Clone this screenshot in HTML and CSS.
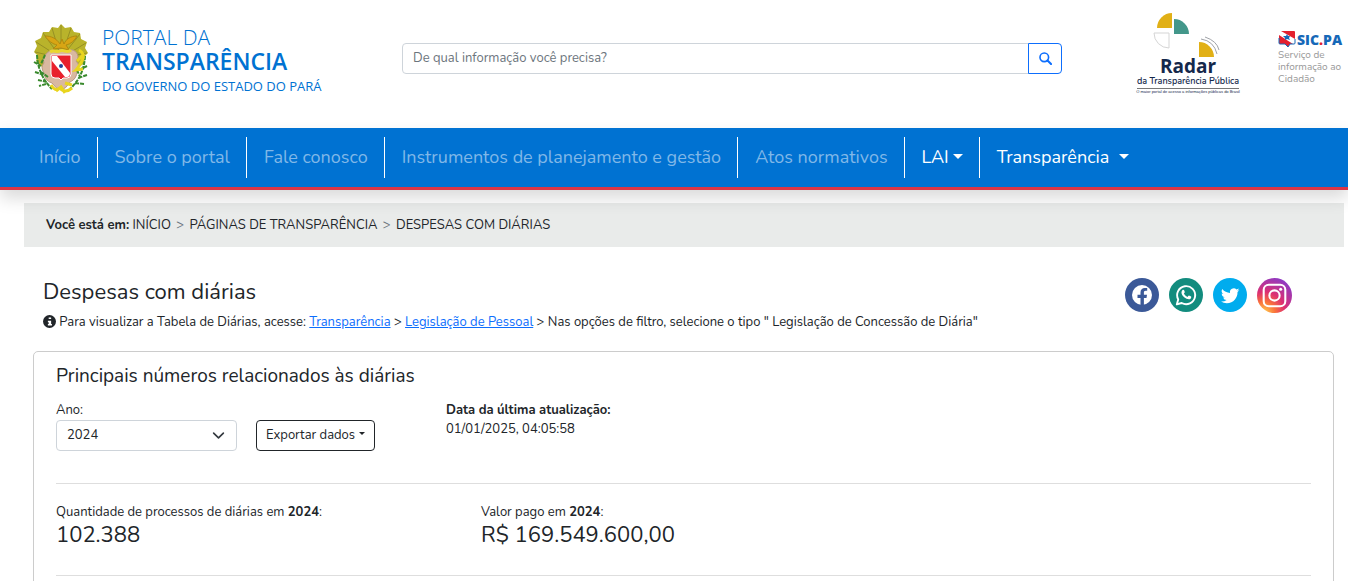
FILE: index.html
```
<!DOCTYPE html>
<html lang="pt-BR">
<head>
    <meta charset="UTF-8">
    <meta name="viewport" content="width=device-width, initial-scale=1.0">
    <title>Despesas com diárias - Portal da Transparência</title>
    <link rel="stylesheet" href="styles.css">
</head>
<body>

<header class="header">
    <a class="brand" href="#">
        <svg class="brand-crest" viewBox="0 0 56 72" aria-hidden="true">
            <path d="M9 43 3 37 5 32 1 28 4 22 2 17 8 14 10 8 16 8 19 3 25 4 28 0 32 4 38 3 41 8 47 9 48 15 54 18 52 24 55 29 51 33 52 39 46 43Z" fill="#b9b32b"/>
            <path d="M28 34V1M28 34 19 4M28 34 10 9M28 34 3 18M28 34 2 28M28 34 38 4M28 34 47 10M28 34 53 19M28 34 54 29" stroke="#969024" stroke-width="1" fill="none"/>
            <path d="M14 29q5-5 9-2 5-3 10 0 6-3 10 1 4 5 0 9 5 5 1 10 0 8-7 11-4 7-9 8-5-1-9-7-7-2-8-10-4-6 0-10-2-5 3-10z" fill="#d9b8a0" stroke="#b89a84" stroke-width="1"/>
            <path d="M27 20c-4-6-9-8-15-8 3 5 8 8 12 9l-4 4 8-1 8 2-3-5c5-1 9-5 11-9-6 0-11 3-13 8l-2-5z" fill="#d8a514" stroke="#b08a10" stroke-width="1"/>
            <path d="M17 28c4-3 6 1 10-1s7 3 11-1" stroke="#ead72f" stroke-width="3" fill="none"/>
            <path d="M4 31q1 20 15 34M1 38l7 4M2 48l9 3M5 56l9 2M12 31l-4 9M13 60l-7 2M15 53l-7-5" stroke="#3a8a2e" stroke-width="2" fill="none" stroke-dasharray="4 1"/>
            <path d="M52 32q-1 20-15 33M54 42l-8 4M54 51l-9 3M51 60l-9-1M44 46l4 9" stroke="#3a8a2e" stroke-width="2" fill="none" stroke-dasharray="4 1"/>
            <path d="M46 26q7 4 3 11t-6 9l7-1M50 31l-6 6" stroke="#e9d51e" stroke-width="3" fill="none"/>
            <path d="M18 61q4 7 9 3 5 6 12 0M23 67l5-4 4 6M32 59l7 2" stroke="#e9d51e" stroke-width="3" fill="none"/>
            <path d="M18 31h20v19q0 4-4 4h-4l-2 2-2-2h-4q-4 0-4-4z" fill="#e8202c" stroke="#fff" stroke-width="1"/>
            <path d="M19 32h5l13 17q0 4-3 4h-2L19 37z" fill="#fff"/>
            <circle cx="28" cy="42" r="2" fill="#24449a"/>
        </svg>
        <span class="brand-text">
            <span class="brand-top">PORTAL DA</span>
            <span class="brand-main">TRANSPARÊNCIA</span>
            <span class="brand-sub">DO GOVERNO DO ESTADO DO PARÁ</span>
        </span>
    </a>

    <form class="search" role="search">
        <input type="search" class="search-input" placeholder="De qual informação você precisa?" aria-label="De qual informação você precisa?">
        <button type="submit" class="search-btn" aria-label="Buscar">
            <svg width="13" height="13" viewBox="0 0 16 16" aria-hidden="true"><circle cx="6.5" cy="6.5" r="5.3" fill="none" stroke="currentColor" stroke-width="2"/><path d="m10.5 10.5 4.3 4.3" stroke="currentColor" stroke-width="2.5" stroke-linecap="round"/></svg>
        </button>
    </form>

    <div class="partners">
        <a class="radar" href="#">
            <svg class="radar-mark" viewBox="0 0 66 46" aria-hidden="true">
                <path d="M17 15V0A15 15 0 0 0 2 15z" fill="#e1b016"/>
                <path d="M19 6v15h15A15 15 0 0 0 19 6z" fill="#43978a"/>
                <path d="M14 20v15A15 15 0 0 1 -1 20z" fill="#fff" stroke="#d5d5d5" stroke-width="1"/>
                <path d="M44 29v15h15A15 15 0 0 0 44 29z" fill="#e1b016"/>
                <path d="M46 26q13 2 16 15M50 24q12 4 14 13" fill="none" stroke="#a0a3a8" stroke-width="1"/>
            </svg>
            <span class="radar-name">Radar</span>
            <span class="radar-sub">da Transparência Pública</span>
            <span class="radar-note">O maior portal de acesso a informações públicas do Brasil</span>
        </a>
        <a class="sic" href="#">
            <span class="sic-name">
                <svg width="18" height="18" viewBox="0 0 18 18" aria-hidden="true">
                    <path d="M1 1h15q1 0 1 1v11q0 1-1 1h-4l-2 3-3-3H2q-1 0-1-1V2q0-1 1-1z" fill="#e3202e"/>
                    <path d="M1 1h2l14 8v5h-2L1 5z" fill="#fff"/>
                    <path d="m9 4 1 2h2l-1 2 1 2-3-1-2 1v-2L5 6h3z" fill="#1668b8"/>
                    <path d="M1 8v5q0 1 1 1h5l3 3 2-3h4q1 0 1-1V9" fill="none" stroke="#1668b8" stroke-width="1"/>
                </svg>SIC<span class="sic-dot">.</span>PA
            </span>
            <span class="sic-text">Serviço de informação ao Cidadão</span>
        </a>
    </div>
</header>

<nav class="navbar" aria-label="Principal">
    <ul class="nav-list">
        <li><a href="#">Início</a></li>
        <li><a href="#">Sobre o portal</a></li>
        <li><a href="#">Fale conosco</a></li>
        <li><a href="#">Instrumentos de planejamento e gestão</a></li>
        <li><a href="#">Atos normativos</a></li>
        <li><button type="button" class="nav-toggle">LAI<span class="caret"></span></button></li>
        <li><button type="button" class="nav-toggle nav-toggle-wide">Transparência<span class="caret"></span></button></li>
    </ul>
</nav>

<nav class="breadcrumb" aria-label="Você está em">
    <strong>Você está em:</strong>
    <a href="#">INÍCIO</a>
    <span class="sep">&gt;</span>
    <a href="#">PÁGINAS DE TRANSPARÊNCIA</a>
    <span class="sep">&gt;</span>
    <span>DESPESAS COM DIÁRIAS</span>
</nav>

<main class="content">
    <div class="page-head">
        <div>
            <h1>Despesas com diárias</h1>
            <p class="hint">
                <svg width="13" height="13" viewBox="0 0 16 16" aria-hidden="true"><circle cx="8" cy="8" r="8" fill="#212529"/><path d="M7 3h3v2H7zM6 7h4v4h1v2H6v-2h1V9H6z" fill="#fff"/></svg>
                Para visualizar a Tabela de Diárias, acesse: <a href="#">Transparência</a> &gt; <a href="#">Legislação de Pessoal</a> &gt; Nas opções de filtro, selecione o tipo " Legislação de Concessão de Diária"
            </p>
        </div>
        <div class="social">
            <a href="#" aria-label="Facebook">
                <svg viewBox="0 0 34 34"><circle cx="17" cy="17" r="17" fill="#3b5998"/><circle cx="17" cy="17" r="10" fill="#fff"/><path d="M15.5 27.5V20h-3v-3.200h3v-2.400c0-3 1.700-4.500 4.300-4.500l2.400.2v2.700h-1.500c-1.400 0-1.800.8-1.800 1.700v2.300h3.100l-.5 3.200h-2.600v7.500z" fill="#3b5998"/></svg>
            </a>
            <a href="#" aria-label="WhatsApp">
                <svg viewBox="0 0 34 34"><circle cx="17" cy="17" r="17" fill="#128c7e"/><path d="m7.800 26.400 1.400-5a9 9 0 1 1 3.500 3.600z" fill="none" stroke="#fff" stroke-width="1.900" stroke-linejoin="round"/><path d="M13.600 12c.6-.6 1.200-.3 1.400.1l.8 1.900c.1.500-.7 1.300-.9 1.500.7 1.500 2 2.700 3.600 3.400.4-.3 1.100-1.400 1.500-1.300l2.100 1c.3.300.1 1.600-.5 2.100-2.500 2-8.800-2.100-9.100-5.700-.1-1.200.4-2.300 1.100-3z" fill="#fff"/></svg>
            </a>
            <a href="#" aria-label="Twitter">
                <svg viewBox="0 0 34 34"><circle cx="17" cy="17" r="17" fill="#00acee"/><path transform="translate(8 8) scale(1.150)" d="M5.026 15c6.038 0 9.341-5.003 9.341-9.334q.002-.211-.006-.422A6.700 6.700 0 0 0 16 3.542a6.700 6.700 0 0 1-1.889.518 3.300 3.300 0 0 0 1.447-1.817 6.500 6.500 0 0 1-2.087.793A3.286 3.286 0 0 0 7.875 6.030a9.320 9.320 0 0 1-6.767-3.429 3.290 3.290 0 0 0 1.018 4.382A3.300 3.300 0 0 1 .64 6.575v.045a3.290 3.290 0 0 0 2.632 3.218 3.200 3.200 0 0 1-.865.115 3 3 0 0 1-.614-.057 3.280 3.280 0 0 0 3.067 2.277A6.600 6.600 0 0 1 .78 13.580a6 6 0 0 1-.78-.045A9.340 9.340 0 0 0 5.026 15" fill="#fff"/></svg>
            </a>
            <a href="#" aria-label="Instagram">
                <svg class="social-insta" viewBox="0 0 34 34">
                    <defs><radialGradient id="insta" cx=".2" cy="1" r="1.100"><stop offset="0" stop-color="#ffd04f"/><stop offset=".3" stop-color="#f9703c"/><stop offset=".55" stop-color="#dc2f72"/><stop offset="1" stop-color="#8a3ac8"/></radialGradient></defs>
                    <circle cx="17" cy="17" r="17" fill="url(#insta)"/>
                    <rect x="6.500" y="6.500" width="21" height="21" rx="5" fill="none" stroke="#fff" stroke-width="2"/>
                    <circle cx="17" cy="17" r="5" fill="none" stroke="#fff" stroke-width="2"/>
                    <circle cx="23" cy="11" r="1.500" fill="#fff"/>
                </svg>
            </a>
        </div>
    </div>

    <section class="card">
        <h2>Principais números relacionados às diárias</h2>
        <div class="filters">
            <div class="field">
                <label for="ano">Ano:</label>
                <select id="ano">
                    <option>2024</option>
                    <option>2023</option>
                    <option>2022</option>
                </select>
            </div>
            <button type="button" class="export-btn">Exportar dados<span class="caret"></span></button>
            <p class="updated"><strong>Data da última atualização:</strong><br>01/01/2025, 04:05:58</p>
        </div>
        <hr>
        <div class="totals">
            <div>
                <p>Quantidade de processos de diárias em <strong>2024</strong>:</p>
                <p class="total">102.388</p>
            </div>
            <div>
                <p>Valor pago em <strong>2024</strong>:</p>
                <p class="total">R$ 169.549.600,00</p>
            </div>
        </div>
        <hr>
    </section>
</main>

</body>
</html>
```
FILE: styles.css
```
* {
    box-sizing: border-box;
}
body {
    margin: 0;
    font-family: Nunito, Lato, sans-serif;
    font-size: 13px;
    line-height: 19px;
    color: #212529;
    background-color: #fff;
}
h1, h2, p {
    margin: 0;
    font-weight: 400;
}
button, input, select {
    font: inherit;
}

/* header */
.header {
    display: grid;
    grid-template-columns: 402fr 660fr 286fr;
    align-items: center;
    height: 128px;
}
.brand {
    display: flex;
    align-items: center;
    gap: 13px;
    padding: 0 0 6px 33px;
    color: #0072d2;
    text-decoration: none;
}
.brand-crest {
    width: 56px;
    height: 72px;
    margin-bottom: 2px;
}
.brand-text {
    display: flex;
    flex-direction: column;
    font-family: "Open Sans", sans-serif;
    white-space: nowrap;
}
.brand-top {
    font-size: 21px;
    font-weight: 300;
    line-height: 24px;
}
.brand-main {
    font-size: 23px;
    font-weight: 600;
    line-height: 25px;
}
.brand-sub {
    font-size: 13px;
    line-height: 24px;
}
.search {
    display: flex;
    padding-bottom: 12px;
}
.search-input {
    flex: 1;
    min-width: 0;
    height: 31px;
    padding: 4px 10px;
    border: 1px solid #ced4da;
    border-radius: 4px 0 0 4px;
    appearance: none;
}
.search-input::placeholder {
    color: #6c757d;
}
.search-btn {
    display: flex;
    align-items: center;
    justify-content: center;
    width: 34px;
    margin-left: -1px;
    padding: 0;
    border: 1px solid #0d6efd;
    border-radius: 0 4px 4px 0;
    background: #fff;
    color: #0d6efd;
}
.partners {
    display: flex;
    justify-content: flex-end;
    align-items: center;
    gap: 40px;
    padding-bottom: 20px;
}
.partners a {
    text-decoration: none;
}
.radar {
    display: flex;
    flex-direction: column;
    align-items: center;
    width: 100px;
    color: #14284b;
    white-space: nowrap;
}
.radar-mark {
    width: 66px;
    height: 46px;
    overflow: visible;
}
.radar-name {
    font-family: "Open Sans", sans-serif;
    font-size: 19px;
    font-weight: 700;
    line-height: 15px;
}
.radar-sub {
    font-size: 9px;
    font-weight: 600;
    line-height: 14px;
    border-bottom: 1px solid #777;
}
.radar-note {
    font-family: "Liberation Sans", sans-serif;
    font-size: 4px;
    line-height: 6px;
}
.sic {
    width: 70px;
    color: #999;
}
.sic-name {
    display: flex;
    align-items: center;
    padding-top: 6px;
    font-family: "Open Sans", sans-serif;
    font-size: 14px;
    font-weight: 800;
    color: #1668b8;
}
.sic-name svg {
    flex: none;
    margin-right: 1px;
}
.sic-dot {
    color: #e3202e;
}
.sic-text {
    display: block;
    font-size: 10px;
    line-height: 12px;
}

/* main menu */
.navbar {
    position: relative;
    padding: 9px 22px;
    background: #0072d2;
    border-bottom: 3px solid #dc3545;
    box-shadow: 0 8px 16px rgba(0, 0, 0, 0.15);
}
.nav-list {
    display: flex;
    margin: 0;
    padding: 0;
    list-style: none;
    font-size: 18px;
    line-height: 40px;
    white-space: nowrap;
}
.nav-list li {
    padding: 0 16px 0 17px;
    height: 41px;
}
.nav-list li + li {
    border-left: 1px solid #fff;
}
.nav-list a {
    color: #80b8e8;
    text-decoration: none;
}
.nav-toggle {
    padding: 0;
    border: 0;
    background: none;
    color: #fff;
}
.caret {
    display: inline-block;
    margin-left: 4px;
    vertical-align: middle;
    border-top: 5px solid;
    border-left: 5px solid transparent;
    border-right: 5px solid transparent;
}
.nav-toggle .caret {
    margin-bottom: 4px;
}
.nav-toggle-wide .caret {
    margin-left: 10px;
}

/* breadcrumb */
.breadcrumb {
    margin: 13px 4px 0 24px;
    padding: 13px 22px 12px;
    background: #e9ebea;
}
.breadcrumb a {
    color: inherit;
    text-decoration: none;
}
.breadcrumb .sep {
    margin: 0 2px;
    color: #6c757d;
}

/* content */
.content {
    padding: 31px 14px 0 33px;
}
.page-head {
    display: flex;
    justify-content: space-between;
    padding: 0 42px 19px 10px;
}
.page-head h1 {
    font-size: 22px;
    line-height: 29px;
    margin-bottom: 6px;
}
.hint svg {
    vertical-align: -2px;
}
.hint a {
    color: #0d6efd;
}
.social {
    display: flex;
    gap: 10px;
}
.social svg {
    display: block;
    width: 34px;
    height: 34px;
}
.social .social-insta {
    width: 35px;
    height: 35px;
}
.card {
    padding: 11px 22px 60px;
    border: 1px solid #ccc;
    border-radius: 5px;
}
.card h2 {
    font-size: 19px;
    line-height: 26px;
}
.filters {
    display: flex;
    align-items: flex-end;
    margin-top: 12px;
}
.field {
    width: 181px;
}
.field label {
    display: block;
}
.field select {
    width: 100%;
    height: 31px;
    padding: 4px 10px;
    border: 1px solid #ced4da;
    border-radius: 4px;
    color: inherit;
    appearance: none;
    background: #fff url("data:image/svg+xml,%3Csvg xmlns='http://www.w3.org/2000/svg' viewBox='0 0 16 16'%3E%3Cpath fill='none' stroke='%23343a40' stroke-linecap='round' stroke-linejoin='round' stroke-width='2' d='m2 5 6 6 6-6'/%3E%3C/svg%3E") no-repeat right 11px center / 13px;
}
.export-btn {
    width: 119px;
    height: 31px;
    margin-left: 19px;
    padding: 0;
    border: 1px solid #212529;
    border-radius: 4px;
    background: #fff;
    color: inherit;
    white-space: nowrap;
}
.export-btn .caret {
    border-width: 3px 3px 0;
    margin-bottom: 4px;
}
.updated {
    align-self: flex-start;
    margin-left: 71px;
}
hr {
    margin: 32px 0 19px;
    border: 0;
    border-top: 1px solid #dedede;
}
.totals {
    display: grid;
    grid-template-columns: 425fr 830fr;
}
.total {
    font-size: 22px;
    line-height: 27px;
}
.totals + hr {
    margin-top: 26px;
}
```
